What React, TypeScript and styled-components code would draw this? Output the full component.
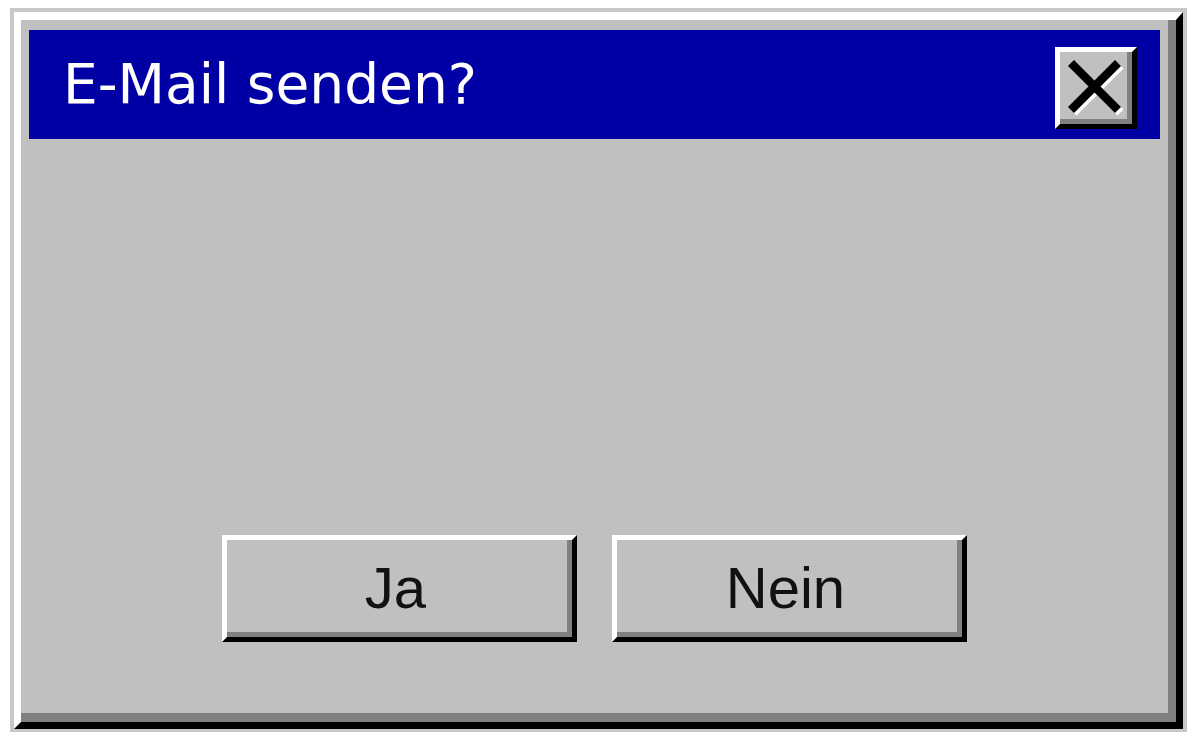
import styled, { createGlobalStyle } from "styled-components";

const GlobalStyle = createGlobalStyle`
  html, body {
    margin: 0;
    padding: 0;
    background: #ffffff;
  }
  #root {
    padding: 8px 0 0 10px;
  }
`;

const Window = styled.div`
  width: 1177px;
  height: 724px;
  box-sizing: border-box;
  border: 4px solid #c8c8c8;
  border-bottom-width: 3px;
`;

const Frame = styled.div`
  height: 100%;
  box-sizing: border-box;
  border-style: solid;
  border-width: 8px 7px 7px 7px;
  border-color: #ffffff #000000 #000000 #ffffff;
`;

const Face = styled.div`
  height: 100%;
  box-sizing: border-box;
  background: #c0c0c0;
  border-style: solid;
  border-width: 0 8px 9px 0;
  border-color: #808080;
  display: flex;
  flex-direction: column;
`;

const TitleBar = styled.div`
  margin: 10px 8px 0 8px;
  height: 109px;
  background: #0000a4;
  display: flex;
  align-items: center;
  justify-content: space-between;
  padding: 0 23px 0 34px;
`;

const Title = styled.span`
  font-family: "DejaVu Sans", sans-serif;
  font-size: 55px;
  line-height: 1;
  color: #ffffff;
`;

const Bevel = styled.button`
  box-sizing: border-box;
  background: #c0c0c0;
  border-style: solid;
  border-width: 5px;
  border-color: #ffffff #000000 #000000 #ffffff;
  box-shadow: inset -5px -5px 0 #808080;
  padding: 0;
  margin: 0;
  display: flex;
  align-items: center;
  justify-content: center;
  cursor: pointer;
`;

const CloseButton = styled(Bevel)`
  width: 82px;
  height: 82px;
  margin-top: 6px;
`;

const Body = styled.div`
  flex: 1;
  display: flex;
  align-items: flex-end;
  justify-content: center;
  gap: 35px;
  padding-bottom: 71px;
`;

const DialogButton = styled(Bevel)`
  width: 355px;
  height: 107px;
  font-family: "Liberation Sans", Arial, sans-serif;
  font-size: 58px;
  color: #111111;
  padding: 0 8px 2px 0;
`;

function CloseGlyph() {
  return (
    <svg width="72" height="72" viewBox="0 0 72 72" aria-hidden="true">
      <g strokeWidth="8.5" strokeLinecap="butt">
        <path d="M11 11 L58 58 M58 11 L11 58" stroke="#ffffff" transform="translate(2.5 2.5)" />
        <path d="M11 11 L58 58 M58 11 L11 58" stroke="#000000" />
      </g>
    </svg>
  );
}

export default function App() {
  return (
    <>
      <GlobalStyle />
      <Window>
        <Frame>
          <Face>
            <TitleBar>
              <Title>E-Mail senden?</Title>
              <CloseButton aria-label="Schließen">
                <CloseGlyph />
              </CloseButton>
            </TitleBar>
            <Body>
              <DialogButton>Ja</DialogButton>
              <DialogButton>Nein</DialogButton>
            </Body>
          </Face>
        </Frame>
      </Window>
    </>
  );
}
